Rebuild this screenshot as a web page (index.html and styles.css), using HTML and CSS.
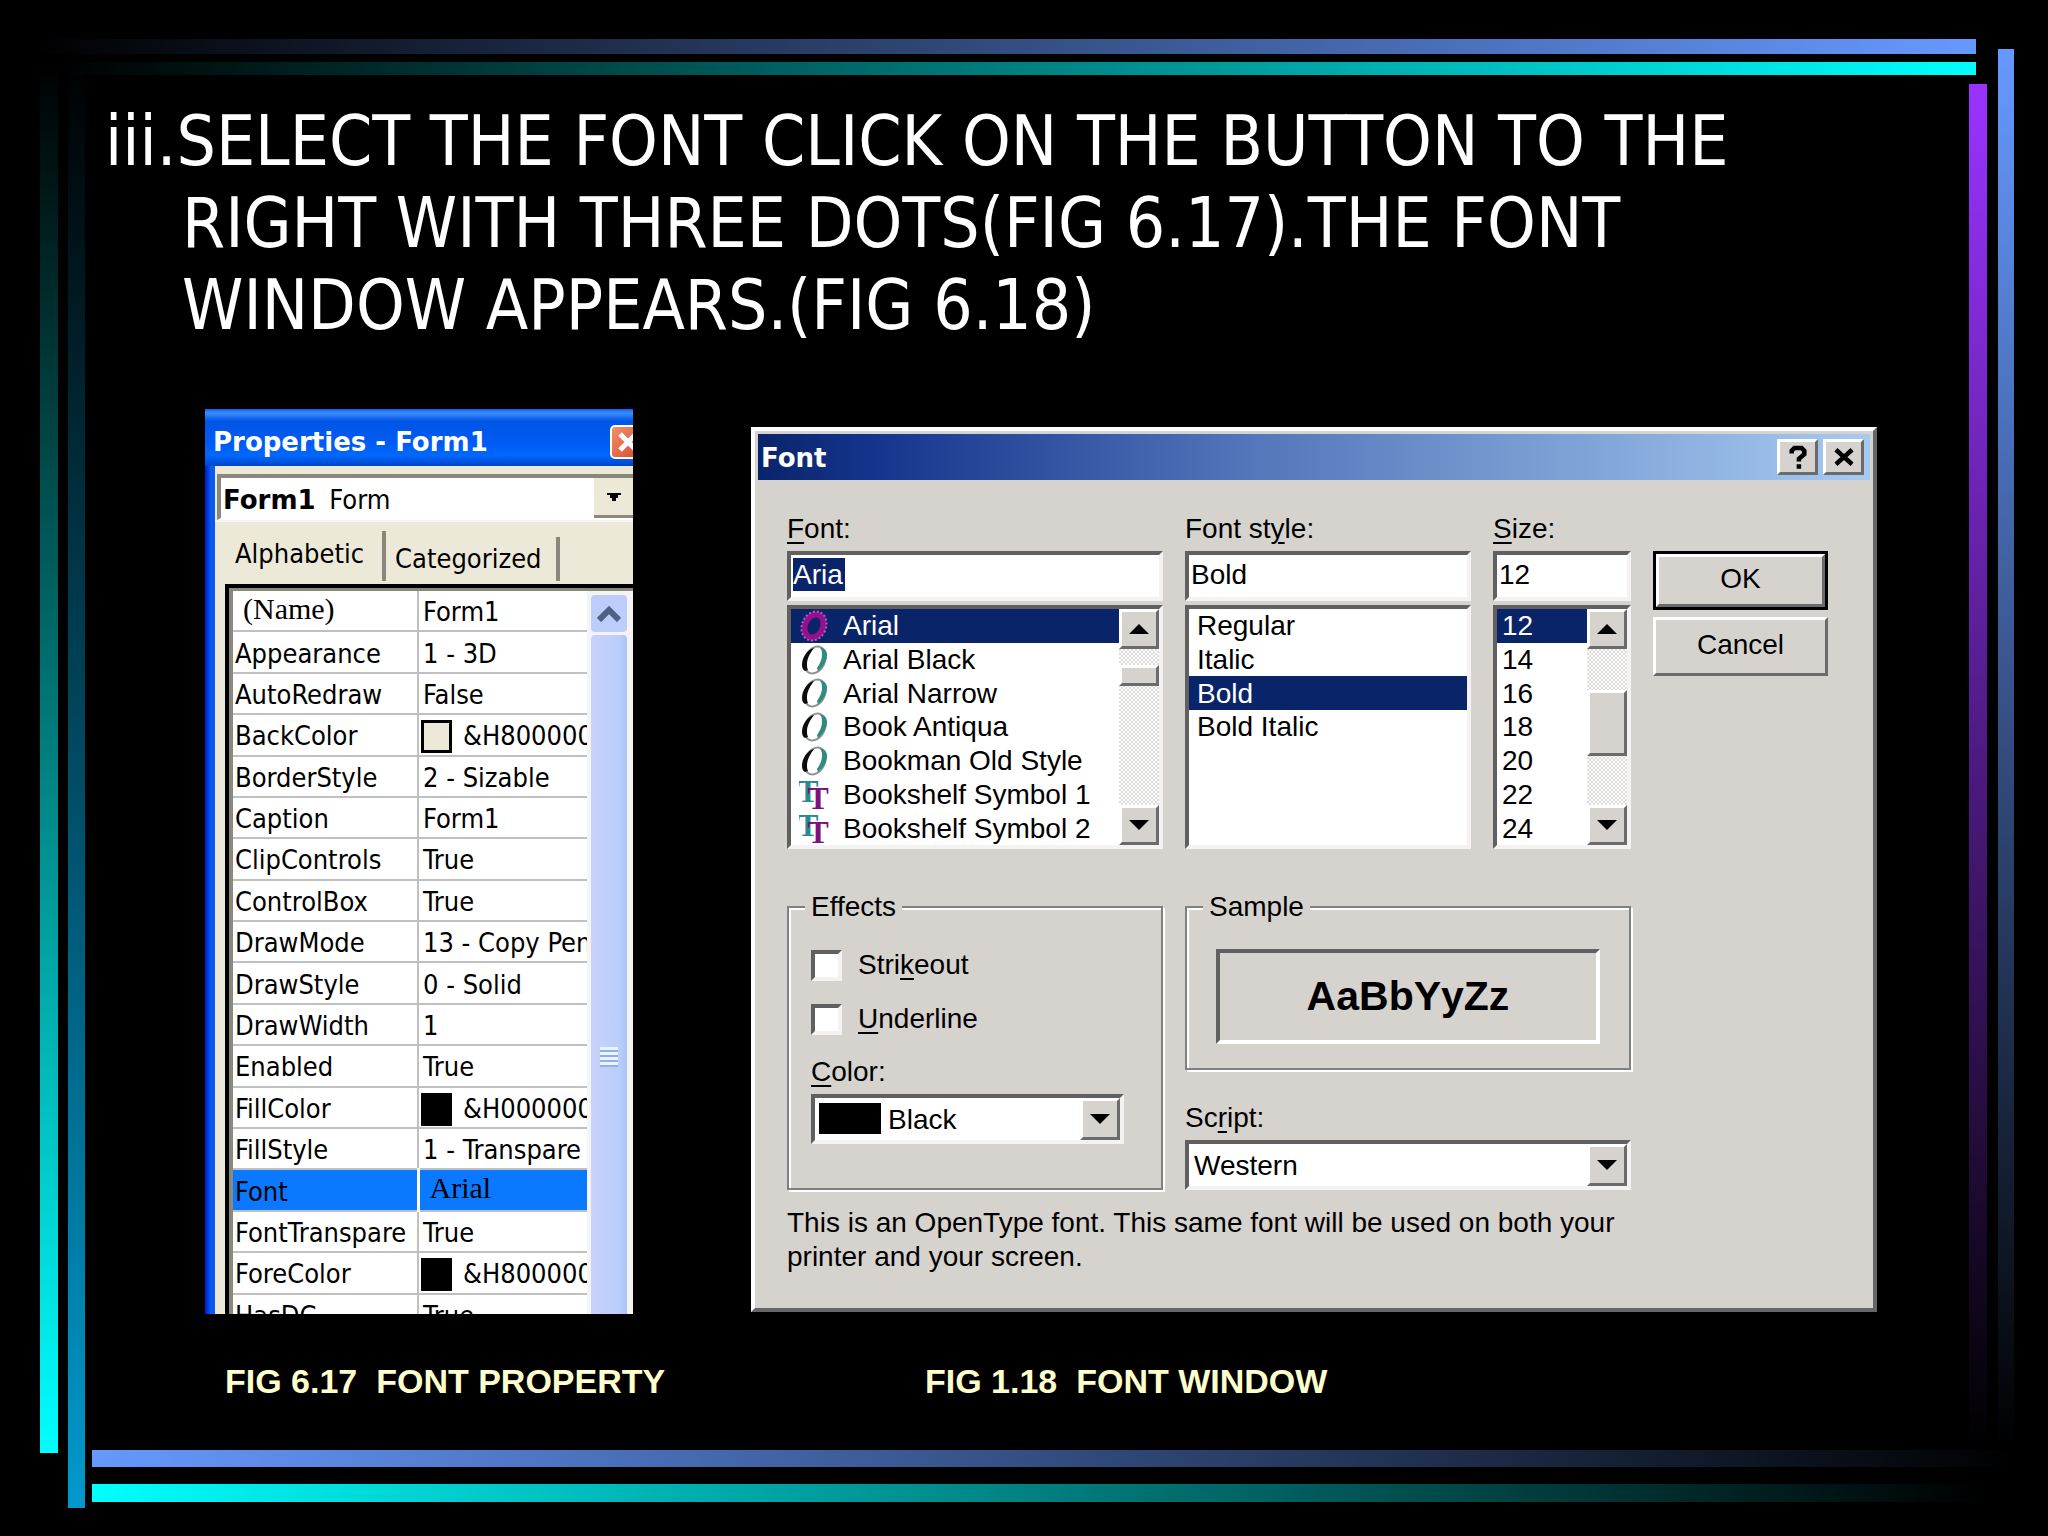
FILE: index.html
```html
<!DOCTYPE html>
<html lang="en">
<head>
    <meta charset="UTF-8">
    <meta name="viewport" content="width=device-width, initial-scale=1.0">
    <title>Font Property</title>
    <link rel="stylesheet" href="styles.css">
</head>
<body>
    <!-- Shared list icons -->
    <svg class="sprite" aria-hidden="true">
        <symbol id="icon-o" viewBox="0 0 30 32">
            <ellipse cx="16" cy="16" rx="10" ry="14" transform="rotate(24 16 16)" fill="none" stroke="#8c9494" stroke-width="2"/>
            <path d="M12 5C6 9 3 15 3 21c0 3 1 5 3 6l3-1c-1-2-1-4-1-6 0-5 3-11 7-16z" fill="#0c0c0c"/>
            <path d="M23 4c3 1 5 3 5 7 0 6-4 12-9 16l-1-3c3-4 5-9 5-13 0-3 0-5-2-7z" fill="#2f8c82"/>
        </symbol>
        <symbol id="icon-o-selected" viewBox="0 0 30 32">
            <ellipse cx="15" cy="16" rx="9" ry="12" transform="rotate(24 15 16)" fill="none" stroke="#93108f" stroke-width="6"/>
            <ellipse cx="15" cy="16" rx="12" ry="15" transform="rotate(24 15 16)" fill="none" stroke="#b45cc0" stroke-width="2" stroke-dasharray="2 2"/>
        </symbol>
        <symbol id="icon-tt" viewBox="0 0 32 32">
            <text x="-2" y="24" class="tt tt-back">T</text>
            <text x="9" y="32" class="tt tt-front">T</text>
        </symbol>
    </svg>

    <main class="slide">
        <h1>iii.SELECT THE FONT CLICK ON THE BUTTON TO THE<br>RIGHT WITH THREE DOTS(FIG 6.17).THE FONT<br>WINDOW APPEARS.(FIG 6.18)</h1>

        <div class="figures">
            <figure>
                <!-- Properties window -->
                <section class="props">
                    <header class="props-title">
                        <h2>Properties - Form1</h2>
                        <button class="props-close" aria-label="Close">
                            <svg viewBox="0 0 20 20" width="20" height="20"><path d="M2 2l16 16M18 2L2 18" stroke="#fff" stroke-width="5"/></svg>
                        </button>
                    </header>
                    <div class="props-body">
                        <div class="object-box">
                            <span class="object-name"><b>Form1</b> Form</span>
                            <button class="object-arrow" aria-label="Choose object">
                                <svg viewBox="0 0 14 8" width="14" height="8"><path d="M0 0h14v2h-3v3H9v3H5V5H3V2H0z"/></svg>
                            </button>
                        </div>
                        <div class="tabs">
                            <button class="tab active">Alphabetic</button>
                            <button class="tab">Categorized</button>
                        </div>
                        <div class="sheet">
                            <table>
                                <tr><th class="serif">(Name)</th><td>Form1</td></tr>
                                <tr><th>Appearance</th><td>1 - 3D</td></tr>
                                <tr><th>AutoRedraw</th><td>False</td></tr>
                                <tr><th>BackColor</th><td><i class="swatch light"></i>&amp;H800000</td></tr>
                                <tr><th>BorderStyle</th><td>2 - Sizable</td></tr>
                                <tr><th>Caption</th><td>Form1</td></tr>
                                <tr><th>ClipControls</th><td>True</td></tr>
                                <tr><th>ControlBox</th><td>True</td></tr>
                                <tr><th>DrawMode</th><td>13 - Copy Pen</td></tr>
                                <tr><th>DrawStyle</th><td>0 - Solid</td></tr>
                                <tr><th>DrawWidth</th><td>1</td></tr>
                                <tr><th>Enabled</th><td>True</td></tr>
                                <tr><th>FillColor</th><td><i class="swatch"></i>&amp;H000000</td></tr>
                                <tr><th>FillStyle</th><td>1 - Transpare</td></tr>
                                <tr class="selected"><th>Font</th><td class="serif">Arial</td></tr>
                                <tr><th>FontTranspare</th><td>True</td></tr>
                                <tr><th>ForeColor</th><td><i class="swatch"></i>&amp;H800000</td></tr>
                                <tr><th>HasDC</th><td>True</td></tr>
                            </table>
                            <div class="xp-scroll">
                                <button class="xp-up" aria-label="Scroll up">
                                    <svg viewBox="0 0 24 16" width="24" height="16"><path d="M2 14L12 4l10 10" fill="none" stroke="#4d6185" stroke-width="6"/></svg>
                                </button>
                                <div class="xp-thumb"><span class="grip"></span></div>
                            </div>
                        </div>
                    </div>
                </section>
                <figcaption>FIG 6.17&nbsp; FONT PROPERTY</figcaption>
            </figure>

            <figure class="right">
                <!-- Font window -->
                <section class="dialog">
                    <header class="dialog-title">
                        <h2>Font</h2>
                        <button class="bevel" aria-label="Help">
                            <svg viewBox="0 0 20 26" width="18" height="24"><path d="M3 9V6l3-3h8l3 3v4l-6 5v3M11 21v5" fill="none" stroke="#000" stroke-width="5"/></svg>
                        </button>
                        <button class="bevel" aria-label="Close">
                            <svg viewBox="0 0 24 20" width="22" height="18"><path d="M3 2l18 16M21 2L3 18" stroke="#000" stroke-width="5"/></svg>
                        </button>
                    </header>

                    <form class="dialog-body">
                        <div class="field">
                            <label for="font"><u>F</u>ont:</label>
                            <input class="sunken marked" type="text" id="font" value="Aria">
                            <div class="list sunken">
                                <ul>
                                    <li class="on"><svg class="icon"><use href="#icon-o-selected"/></svg>Arial</li>
                                    <li><svg class="icon"><use href="#icon-o"/></svg>Arial Black</li>
                                    <li><svg class="icon"><use href="#icon-o"/></svg>Arial Narrow</li>
                                    <li><svg class="icon"><use href="#icon-o"/></svg>Book Antiqua</li>
                                    <li><svg class="icon"><use href="#icon-o"/></svg>Bookman Old Style</li>
                                    <li><svg class="icon"><use href="#icon-tt"/></svg>Bookshelf Symbol 1</li>
                                    <li><svg class="icon"><use href="#icon-tt"/></svg>Bookshelf Symbol 2</li>
                                </ul>
                                <div class="scroll">
                                    <button type="button" class="bevel" aria-label="Up"><svg class="arrow" viewBox="0 0 20 10"><path d="M10 0l10 10H0z"/></svg></button>
                                    <div class="track"><div class="thumb bevel"></div></div>
                                    <button type="button" class="bevel" aria-label="Down"><svg class="arrow" viewBox="0 0 20 10"><path d="M0 0h20L10 10z"/></svg></button>
                                </div>
                            </div>
                        </div>

                        <div class="field">
                            <label for="style">Font st<u>y</u>le:</label>
                            <input class="sunken" type="text" id="style" value="Bold">
                            <div class="list sunken">
                                <ul>
                                    <li>Regular</li>
                                    <li>Italic</li>
                                    <li class="on">Bold</li>
                                    <li>Bold Italic</li>
                                </ul>
                            </div>
                        </div>

                        <div class="field">
                            <label for="size"><u>S</u>ize:</label>
                            <input class="sunken" type="text" id="size" value="12">
                            <div class="list sunken sizes">
                                <ul>
                                    <li class="on">12</li>
                                    <li>14</li>
                                    <li>16</li>
                                    <li>18</li>
                                    <li>20</li>
                                    <li>22</li>
                                    <li>24</li>
                                </ul>
                                <div class="scroll">
                                    <button type="button" class="bevel" aria-label="Up"><svg class="arrow" viewBox="0 0 20 10"><path d="M10 0l10 10H0z"/></svg></button>
                                    <div class="track"><div class="thumb bevel"></div></div>
                                    <button type="button" class="bevel" aria-label="Down"><svg class="arrow" viewBox="0 0 20 10"><path d="M0 0h20L10 10z"/></svg></button>
                                </div>
                            </div>
                        </div>

                        <div class="actions">
                            <button type="button" class="push bevel default">OK</button>
                            <button type="button" class="push bevel">Cancel</button>
                        </div>

                        <fieldset class="effects">
                            <legend>Effects</legend>
                            <label class="check"><input class="sunken" type="checkbox"><span>Stri<u>k</u>eout</span></label>
                            <label class="check"><input class="sunken" type="checkbox"><span><u>U</u>nderline</span></label>
                            <label for="color"><u>C</u>olor:</label>
                            <div class="drop sunken color">
                                <select id="color"><option>Black</option></select>
                                <span class="drop-btn bevel"><svg class="arrow" viewBox="0 0 20 10"><path d="M0 0h20L10 10z"/></svg></span>
                            </div>
                        </fieldset>

                        <div class="preview">
                            <fieldset>
                                <legend>Sample</legend>
                                <div class="sample">AaBbYyZz</div>
                            </fieldset>
                            <label for="script">Sc<u>r</u>ipt:</label>
                            <div class="drop sunken">
                                <select id="script"><option>Western</option></select>
                                <span class="drop-btn bevel"><svg class="arrow" viewBox="0 0 20 10"><path d="M0 0h20L10 10z"/></svg></span>
                            </div>
                        </div>

                        <p class="note">This is an OpenType font. This same font will be used on both your<br>printer and your screen.</p>
                    </form>
                </section>
                <figcaption>FIG 1.18&nbsp; FONT WINDOW</figcaption>
            </figure>
        </div>
    </main>
</body>
</html>
```
FILE: styles.css
```css
* {
    margin: 0;
    padding: 0;
    box-sizing: border-box;
}

body {
    background: #000;
}

button, input, select {
    font: inherit;
    color: inherit;
    border: none;
    border-radius: 0;
    appearance: none;
}

button {
    display: flex;
    align-items: center;
    justify-content: center;
}

.sprite {
    display: none;
}

/* Slide with the eight fading bars round it */
.slide {
    min-height: 100vh;
    padding: 100px 171px 100px 105px;
    background:
        linear-gradient(to right, transparent, #6699ff) left 30px top 39px / calc(100% - 102px) 15px no-repeat,
        linear-gradient(to right, transparent, #00ffff) left 60px top 62px / calc(100% - 132px) 13px no-repeat,
        linear-gradient(to bottom, transparent, #00ffff) left 40px top 60px / 18px calc(100% - 143px) no-repeat,
        linear-gradient(to bottom, transparent, #0099cc) left 68px top 60px / 17px calc(100% - 88px) no-repeat,
        linear-gradient(to left, transparent, #6699ff) left 92px bottom 69px / calc(100% - 122px) 17px no-repeat,
        linear-gradient(to left, transparent, #00ffff) left 92px bottom 34px / calc(100% - 152px) 18px no-repeat,
        linear-gradient(to top, transparent, #9933ff) right 61px top 84px / 18px calc(100% - 170px) no-repeat,
        linear-gradient(to top, transparent, #6699ff) right 34px top 49px / 16px calc(100% - 135px) no-repeat,
        #000;
}

h1 {
    padding-left: 77px;
    text-indent: -77px;
    font: 69px/82px "DejaVu Sans Condensed", "DejaVu Sans", sans-serif;
    color: #fff;
}

.figures {
    display: grid;
    grid-template-columns: 428px 1fr;
    gap: 118px;
    margin: 63px 0 0 100px;
}

figcaption {
    margin: 47px 0 0 20px;
    font: bold 34px/40px "Liberation Sans", Arial, sans-serif;
    color: #ffffcc;
    white-space: nowrap;
}

.right {
    padding-top: 18px;
}

.right figcaption {
    margin: 49px 0 0 174px;
}

/* Properties window */
.props {
    height: 905px;
    overflow: hidden;
    font: 27px/34px "DejaVu Sans Condensed", "DejaVu Sans", sans-serif;
    color: #000;
    background: linear-gradient(to right, #0019cf, #0a5cf0 6px, #0058e6);
}

.props-title {
    display: flex;
    align-items: center;
    justify-content: space-between;
    height: 57px;
    padding: 8px 0 0 8px;
    background: linear-gradient(#0a62f0, #3c8cff 4px, #0055e5 12px, #005cf5 36px, #0068ff 46px, #0046cc);
}

.props-title h2,
.dialog-title h2 {
    font: bold 26px/34px "DejaVu Sans", sans-serif;
    color: #fff;
}

.props-close {
    flex: none;
    width: 36px;
    height: 34px;
    margin-right: -13px;
    border: 2px solid #fff;
    border-radius: 5px;
    background: linear-gradient(135deg, #f0906c, #d8482c);
}

.props-body {
    margin-left: 10px;
    padding-top: 8px;
    background: #ece9d8;
}

.object-box {
    display: flex;
    height: 46px;
    margin-left: 2px;
    border-top: 4px solid #8a887c;
    border-left: 4px solid #8a887c;
    border-bottom: 2px solid #fff;
    background: #fff;
}

.object-name {
    flex: 1;
    padding: 5px 2px;
    white-space: pre;
}

.object-name b {
    margin-right: 6px;
    font: bold 26px/34px "DejaVu Sans", sans-serif;
}

.object-arrow {
    width: 39px;
    background: #ece9d8;
    border-bottom: 3px solid #8a887c;
}

.tabs {
    display: flex;
    align-items: flex-end;
    height: 64px;
    padding-bottom: 3px;
    border-top: 2px solid #f8f6ee;
}

.tab {
    height: 44px;
    padding: 0 14px 0 9px;
    background: none;
    border-right: 4px solid #8a887c;
}

.tab.active {
    height: 50px;
    padding: 0 18px 4px 20px;
}

.sheet {
    display: flex;
    margin-left: 10px;
    border-top: 4px solid #000;
    border-left: 4px solid #000;
    box-shadow: inset 4px 4px #8a887c;
    padding: 3px 0 0 4px;
}

table {
    flex: none;
    width: 354px;
    height: 745px;
    table-layout: fixed;
    border-collapse: collapse;
    background: #fff;
}

th, td {
    overflow: hidden;
    padding: 3px 0 0 2px;
    border-bottom: 2px solid #c0c0c0;
    font-weight: normal;
    text-align: left;
    white-space: nowrap;
}

th {
    width: 185px;
    border-right: 2px solid #c0c0c0;
}

td {
    padding-left: 4px;
}

.serif {
    padding: 0 0 4px 10px;
    font: 30px/30px "Liberation Serif", serif;
}

.selected {
    background: #0a78ff;
}

.selected td {
    border-left: 3px dashed #fff;
}

.swatch {
    display: inline-block;
    width: 31px;
    height: 33px;
    margin: -2px 11px 0 -2px;
    border: 3px solid #000;
    background: #000;
    vertical-align: middle;
}

.swatch.light {
    background: #ece9d8;
}

.xp-scroll {
    flex: 1;
    display: flex;
    flex-direction: column;
    gap: 3px;
    padding: 4px 6px 0 4px;
    background: #f4f4f4;
}

.xp-up {
    height: 37px;
    border-radius: 4px;
    background: #bccdfb;
}

.xp-thumb {
    flex: 1;
    display: flex;
    justify-content: center;
    padding-top: 412px;
    border-radius: 4px 4px 0 0;
    background: linear-gradient(to right, #c9d2fb, #bacdfc 80%, #a9c3f5);
}

.grip {
    width: 18px;
    height: 20px;
    background: repeating-linear-gradient(#eef4fe 0 3px, #8fb0ee 3px 5px);
}

/* Font window */
.dialog {
    height: 885px;
    padding: 3px;
    font: 28px/34px "Liberation Sans", Arial, sans-serif;
    color: #000;
    background: #d6d3ce;
    border: 4px solid;
    border-color: #fff #666 #666 #fff;
}

.dialog-title {
    display: flex;
    align-items: center;
    gap: 5px;
    height: 46px;
    padding: 0 6px 0 3px;
    background: linear-gradient(to right, #0a246a, #14348c 10%, #5577bb 45%, #a6caf0);
}

.dialog-title h2 {
    flex: 1;
    padding-top: 2px;
}

.dialog-title button {
    width: 41px;
    height: 36px;
}

.bevel {
    background: #d6d3ce;
    border: 3px solid;
    border-color: #fff #6b6b6b #6b6b6b #fff;
}

.sunken {
    background: #fff;
    border: 4px solid;
    border-color: #606060 #f4f3f1 #f4f3f1 #606060;
}

.dialog-body {
    display: grid;
    grid-template-columns: 376fr 286fr 138fr 175px;
    column-gap: 22px;
    padding: 32px 42px 0 29px;
}

.field {
    display: flex;
    flex-direction: column;
    min-width: 0;
}

label {
    display: block;
    height: 34px;
    margin-bottom: 5px;
}

u {
    text-decoration-thickness: 2px;
    text-underline-offset: 4px;
}

.field input {
    width: 100%;
    height: 50px;
    padding: 0 2px 2px;
}

.marked {
    color: #fff;
    background: linear-gradient(#0a246a, #0a246a) 2px 3px / 52px 33px no-repeat #fff;
}

.list {
    display: flex;
    height: 244px;
    margin-top: 4px;
}

.list ul {
    flex: 1;
    display: grid;
    grid-template-rows: repeat(7, 1fr);
    list-style: none;
}

.list li {
    display: flex;
    align-items: center;
    padding-left: 8px;
    line-height: 33px;
    white-space: nowrap;
}

.sizes li {
    padding-left: 5px;
}

.list .on {
    color: #fff;
    background: #0a246a;
}

.icon {
    width: 30px;
    height: 32px;
    margin-right: 14px;
}

.tt {
    font: bold 34px "Liberation Serif", serif;
}

.tt-back {
    fill: #2a8a90;
}

.tt-front {
    fill: #80107c;
}

.scroll {
    flex: none;
    display: flex;
    flex-direction: column;
    width: 40px;
    background: repeating-conic-gradient(#fff 0 25%, #dddbd8 0 50%) 0 0 / 4px 4px;
}

.scroll button {
    height: 40px;
}

.track {
    flex: 1;
    padding-top: 16px;
}

.thumb {
    height: 21px;
}

.sizes .track {
    padding-top: 41px;
}

.sizes .thumb {
    height: 66px;
}

.arrow {
    width: 20px;
    height: 10px;
}

.actions {
    padding-top: 39px;
}

.push {
    width: 100%;
    height: 59px;
    margin-bottom: 7px;
    padding-bottom: 4px;
}

.default {
    outline: 3px solid #000;
    outline-offset: -3px;
    border-width: 6px;
}

fieldset {
    border: 2px solid #808080;
    box-shadow: 2px 2px #fff, inset 2px 2px #fff;
    padding: 0 22px;
}

legend {
    padding: 0 6px;
    margin-left: -6px;
    background: #d6d3ce;
}

.effects {
    height: 300px;
    margin-top: 41px;
}

.check {
    display: flex;
    align-items: center;
    gap: 16px;
    height: 54px;
    margin: 0;
}

.check input {
    width: 31px;
    height: 31px;
}

.effects legend + .check {
    margin-top: 14px;
}

.effects .check + label:not(.check) {
    margin-top: 9px;
}

.drop {
    display: flex;
    height: 50px;
}

.drop select {
    flex: 1;
    padding: 2px 5px 0;
    background: none;
}

.drop-btn {
    display: flex;
    align-items: center;
    justify-content: center;
    width: 40px;
}

.drop.color {
    width: 313px;
}

.drop.color select {
    padding-left: 73px;
    background: linear-gradient(#000, #000) 4px 5px / 62px 31px no-repeat;
}

.preview {
    grid-column: 2 / 4;
    margin-top: 41px;
}

.preview fieldset {
    height: 180px;
    padding: 0 29px;
    margin-bottom: 31px;
}

.preview legend {
    margin-left: -13px;
}

.sample {
    height: 95px;
    margin-top: 25px;
    border: 4px solid;
    border-color: #606060 #fff #fff #606060;
    font: bold 41px/87px "Liberation Sans", Arial, sans-serif;
    text-align: center;
}

.note {
    grid-column: 1 / -1;
    margin-top: 16px;
}
```
